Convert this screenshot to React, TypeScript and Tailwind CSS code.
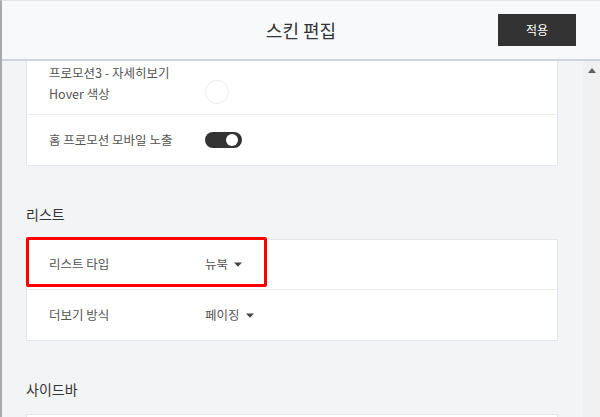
import React from 'react';

const font = { fontFamily: '"Noto Sans CJK KR", "Noto Sans", sans-serif' };

function Caret() {
  return (
    <svg width="8" height="5" viewBox="0 0 8 5" className="ml-[6px]">
      <path d="M0 0.5 L8 0.5 L4 4.8 Z" fill="#444" />
    </svg>
  );
}

function Row({ label, children, last }: { label: React.ReactNode; children?: React.ReactNode; last?: boolean }) {
  return (
    <div className={`relative flex h-[50px] items-center pl-[22px] ${last ? '' : 'border-b border-[#eceef2]'}`}>
      <div className="w-[156px] text-[12.5px] text-[#555]">{label}</div>
      {children}
    </div>
  );
}

function Select({ value }: { value: string }) {
  return (
    <div className="flex items-center text-[12.5px] text-[#555]">
      {value}
      <Caret />
    </div>
  );
}

export default function App() {
  return (
    <div
      style={font}
      className="flex h-[417px] w-[600px] flex-col overflow-hidden border-l-2 border-t border-l-[#a9a9a9] border-t-[#dfe3ea] bg-[#f3f4f6]"
    >
      {/* header */}
      <div className="grid h-[60px] shrink-0 grid-cols-[1fr_auto_1fr] items-center border-b-2 border-[#cfd4dc] bg-[#f8f9fb]">
        <div />
        <h1 className="text-[18px] text-[#333]">스킨 편집</h1>
        <button className="mr-[24px] h-[32px] w-[78px] justify-self-end bg-[#333] text-[12px] text-white">
          적용
        </button>
      </div>

      <div className="flex min-h-0 flex-1">
        <div className="min-w-0 flex-1 overflow-hidden pl-[24px] pr-[25px]">
          <div className="-mt-[20px]">
            {/* 프로모션 card */}
            <div className="border border-[#e3e6ec] bg-white">
              <div className="flex items-start border-b border-[#eceef2] pb-[10px] pl-[22px] pt-[20px]">
                <div className="w-[156px] text-[12.5px] leading-[21px] text-[#555]">
                  프로모션3 - 자세히보기
                  <br />
                  Hover 색상
                </div>
                <div className="mt-[18px] h-[24px] w-[24px] rounded-full border border-[#ececec] bg-white" />
              </div>
              <Row label="홈 프로모션 모바일 노출" last>
                <div className="flex h-[16px] w-[37px] items-center justify-end rounded-full bg-[#333] pr-[4px]">
                  <div className="h-[12px] w-[12px] rounded-full bg-white" />
                </div>
              </Row>
            </div>

            {/* 리스트 */}
            <h2 className="mb-[15px] mt-[38px] text-[14px] leading-[20px] text-[#333]">리스트</h2>
            <div className="border border-[#e3e6ec] bg-white">
              <Row label="리스트 타입">
                <Select value="뉴북" />
                <div className="pointer-events-none absolute -left-[1px] -top-[3px] h-[50px] w-[241px] rounded-[2px] border-[3px] border-[#ff0000]" />
              </Row>
              <Row label="더보기 방식" last>
                <Select value="페이징" />
              </Row>
            </div>

            {/* 사이드바 */}
            <h2 className="mb-[15px] mt-[38px] text-[14px] leading-[20px] text-[#333]">사이드바</h2>
            <div className="h-[60px] border border-[#e3e6ec] bg-white" />
          </div>
        </div>

        {/* scrollbar */}
        <div className="flex w-[17px] shrink-0 justify-center bg-[#f0f0f0] pt-[7px]">
          <svg width="8" height="5" viewBox="0 0 8 5">
            <path d="M4 0 L8 5 L0 5 Z" fill="#606060" />
          </svg>
        </div>
      </div>
    </div>
  );
}
